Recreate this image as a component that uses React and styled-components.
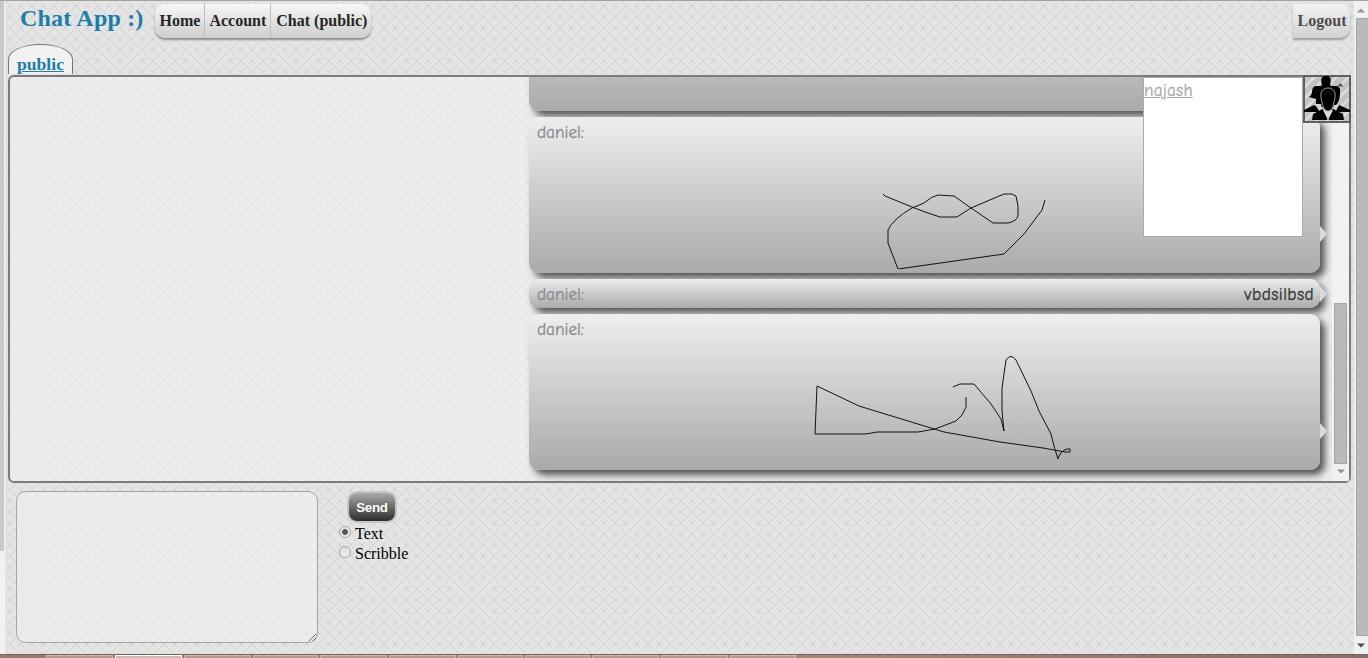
import React from "react";
import styled, { createGlobalStyle, css } from "styled-components";

const weave =
  "data:image/svg+xml," +
  encodeURIComponent(
    '<svg xmlns="http://www.w3.org/2000/svg" width="22" height="22"><g fill="none" stroke="#bdbdbd" stroke-width=".6"><path d="M11 0L22 11L11 22L0 11Z" opacity=".75"/><path opacity=".85" d="M8 8l6 6M14 8l-6 6M0 0l3 3M22 0l-3 3M0 22l3-3M22 22l-3-3"/></g></svg>'
  );

const Global = createGlobalStyle`
  * { box-sizing: border-box; }
  body { margin: 0; overflow: hidden; font-family: "Liberation Serif", serif; font-size: 16px; color: #000; }
`;

const comic = css`
  font-family: "Comic Sans MS", "Comic Neue", Lato, sans-serif;
  font-size: 17.2px;
  line-height: 22px;
  -webkit-text-stroke: 0.3px currentColor;
`;

const Screen = styled.div`
  display: flex;
  flex-direction: column;
  height: 658px;
`;
const Viewport = styled.div`
  display: flex;
  height: 654px;
  border-top: 1px solid #a3a1a1;
`;
const EdgeStrip = styled.div`
  width: 5px;
  border-right: 1px solid #f4f4f4;
  background: linear-gradient(#c9c9c9 550px, #f1f1f1 550px);
`;
const Page = styled.div`
  flex: 1;
  min-width: 0;
  padding: 3px 3px 0;
  background: #e4e4e4 url("${weave}") fixed -1px 6px;
`;
const Header = styled.header`
  display: flex;
  align-items: flex-start;
  height: 40px;
  padding-right: 1px;
`;
const Title = styled.h1`
  margin: 0;
  padding-left: 12px;
  width: 147px;
  font-size: 24px;
  line-height: 29px;
  letter-spacing: 0.2px;
  color: #1d7da8;
  white-space: nowrap;
`;
const Nav = styled.nav`
  display: flex;
  margin-left: ${(p) => (p.$end ? "auto" : 0)};
  border-radius: ${(p) => (p.$end ? "0 10px 10px 0" : "10px")};
  background: linear-gradient(#f7f7f7, #cecece);
  box-shadow: 0 2px 2px #8e8e8e;
  opacity: ${(p) => (p.$end ? 0.8 : 1)};
`;
const NavItem = styled.a`
  height: 34px;
  padding: 0 ${(p) => p.$r ?? 4}px 0 ${(p) => p.$l ?? 4}px;
  line-height: 34px;
  font-weight: bold;
  color: #262626;
  white-space: nowrap;
  & + & { border-left: 1px solid #bebebe; }
`;
const Tab = styled.div`
  width: 65px;
  height: 30px;
  margin-bottom: 1px;
  padding: 9px 0 0 8px;
  border: 1px solid #777;
  border-bottom: 0;
  border-radius: 32px 32px 0 0 / 15px 15px 0 0;
  background: rgba(245, 245, 245, 0.8);
  a { font-size: 17.6px; line-height: 21px; font-weight: bold; color: #1d7da8; text-decoration: underline; }
`;
const Room = styled.section`
  position: relative;
  display: flex;
  width: 1343px;
  height: 408px;
  border: 2px solid #7b7b7b;
  border-radius: 6px;
  background: rgba(242, 242, 242, 0.55);
`;
const Messages = styled.div`
  flex: 1;
  display: flex;
  flex-direction: column;
  justify-content: flex-end;
  gap: 6px;
  padding: 0 12px 11px 519px;
  overflow: hidden;
`;
const Message = styled.article`
  ${comic}
  position: relative;
  display: flex;
  flex: none;
  justify-content: space-between;
  height: ${(p) => p.$h}px;
  padding: 5px 6px 0 8px;
  border-radius: 10px;
  background: linear-gradient(#eee, #aaa);
  box-shadow: 5px 5px 7px #555;
  color: #333;
  &::after {
    content: "";
    position: absolute;
    left: 100%;
    top: ${(p) => p.$tip}px;
    border: 8px solid transparent;
    border-left: 7px solid #dadada;
    border-right: 0;
  }
`;
const Author = styled.span`
  color: #8b8b8b;
`;
const Body = styled.span`
  letter-spacing: 0.45px;
`;
const Scribble = styled.svg`
  width: 300px;
  height: 148px;
  margin: -1px 227px 0 0;
  fill: none;
  stroke: #111;
  stroke-width: 1;
`;
const Track = styled.div`
  display: flex;
  flex-direction: column;
  align-items: center;
  justify-content: ${(p) => (p.$page ? "space-between" : "flex-end")};
  width: ${(p) => (p.$page ? 14 : 17)}px;
  padding: ${(p) => (p.$page ? "7px 0 6px" : "0 0 7px")};
  background: #f1f1f1;
  svg { display: block; }
`;
const Thumb = styled.div`
  width: ${(p) => (p.$page ? 12 : 13)}px;
  height: ${(p) => p.$h}px;
  margin: ${(p) => (p.$page ? "0 0 3px 2px" : "0 0 5px")};
  border: 1px solid #a6a6a6;
  background: #bababa;
  ${(p) => p.$page && "border-right: 0;"}
`;
const UserList = styled.div`
  ${comic}
  position: absolute;
  left: 1133px;
  top: 0;
  width: 160px;
  height: 160px;
  border: 1px solid #aaa;
  background: #fff;
  color: #aaa;
  padding-top: 2px;
  a { text-decoration: underline; letter-spacing: 0.2px; }
`;
const UsersButton = styled.button`
  position: absolute;
  right: -2px;
  top: -2px;
  width: 48px;
  height: 48px;
  padding: 0;
  border: 2px solid #606060;
  background: repeating-linear-gradient(135deg, #c4c4c4 0 5px, #dedede 6px 8px);
  svg { display: block; overflow: visible; }
`;
const Composer = styled.form`
  display: flex;
  padding: 8px 0 0 8px;
`;
const Input = styled.textarea`
  width: 302px;
  height: 152px;
  border: 1px solid #a4a4a4;
  border-radius: 10px;
  background: rgba(242, 242, 242, 0.55);
  resize: both;
`;
const Controls = styled.div`
  display: flex;
  flex-direction: column;
  align-items: flex-start;
  margin-left: 21px;
`;
const Send = styled.button`
  width: 46px;
  height: 28px;
  margin: 2px 0 3px 10px;
  padding: 0;
  border: 0;
  border-radius: 8px;
  background: linear-gradient(#aaa, #2c2c2c);
  box-shadow: 0 0 0 2px #c5c5c5;
  color: #fff;
  font: bold 13.3px "Liberation Sans", sans-serif;
  letter-spacing: -0.25px;
`;
const Choice = styled.label`
  display: flex;
  gap: 4px;
  height: 20px;
  line-height: 20px;
`;
const Radio = styled.span`
  width: 12px;
  height: 12px;
  margin-top: 2px;
  border: 1px solid #a5a5a5;
  border-radius: 50%;
  background: ${(p) => (p.$on ? "radial-gradient(circle, #555 0 2.5px, #e8e8e8 3.3px)" : "linear-gradient(#dcdcdc, #efefef)")};
`;
const Taskbar = styled.div`
  display: flex;
  gap: 2px;
  height: 4px;
  padding-left: 46px;
  border-top: 1px solid #76645c;
  background: linear-gradient(90deg, #947d70, #a18975 60%, #857066);
`;
const Task = styled.div`
  width: ${(p) => p.$w}px;
  border: 1px solid ${(p) => (p.$active ? "#fff" : "#cbb8ac")};
  border-bottom: 0;
  background: ${(p) => (p.$active ? "#cdbbb1" : "#b39c8e")};
`;

const Arrow = ({ up, dark }) => (
  <svg width="8" height="5" viewBox="0 0 8 5">
    <path d={up ? "M0 4.5L4 .5L8 4.5Z" : "M0 .5H8L4 4.5Z"} fill={dark ? "#4c4c4c" : "#939393"} />
  </svg>
);

const Group = () => (
  <svg width="44" height="44" viewBox="0 0 44 44">
    <path d="M14 11L17 8C15 1 17 -1 21 -1C25 -1 27 1 25 8L29 11V30H14Z" />
    <path d="M7 15Q7 9 11 9L16 9V28H11V22L4 20Q7 18 7 15Z" />
    <path d="M27 9H32Q36 10 35 16Q35 24 31 28H27Z" />
    <path d="M-1 35V33L9 28L17 33V35ZM45 35V33L34 28L26 33V35Z" />
    <path d="M10 27H16L17 32L14 34ZM29 28L34 28L31 34L28 32Z" fill="#d4d4d4" />
    <path d="M32 9.500L35.500 6L38.500 9.500Z" fill="#555" />
    <path d="M7 43L8 37L18 32L24 43ZM39 43L38 37L28 32L22 43Z" />
    <path d="M18 33L23 43L28 33Z" fill="#ddd" />
    <path d="M23 11C15 11 15 19 17 25C18 31 20 34 23 34C26 34 28 31 29 25C31 19 31 11 23 11Z" stroke="#9a9a9a" />
  </svg>
);

const tasks = [67, 67, 67, 65, 67, 67, 65, 65, 67, 67, 66];

export default function App() {
  return (
    <Screen>
      <Global />
      <Viewport>
        <EdgeStrip />
        <Page>
          <Header>
            <Title>Chat App :)</Title>
            <Nav>
              <NavItem $l={4.5}>Home</NavItem>
              <NavItem>Account</NavItem>
              <NavItem $l={5}>Chat (public)</NavItem>
            </Nav>
            <Nav $end>
              <NavItem $l={5} $r={3.5}>Logout</NavItem>
            </Nav>
          </Header>
          <Tab><a>public</a></Tab>
          <Room>
            <Messages>
              <Message $h={156} $tip={110} />
              <Message $h={156} $tip={109}>
                <Author>daniel:</Author>
                <Scribble viewBox="787 121 300 148">
                  <path d="M883 194L885 196L912 207L925 212L940 217H957L971 208L1004 194H1012L1016 196L1018 206V216Q1017 221 1008 223H993L971 208L954 196L938 195Q932 196 924 203L912 208Q893 219 888 230V243L898 269L1004 254L1024 234L1042 210L1045 200" />
                </Scribble>
              </Message>
              <Message $h={29} $tip={7}>
                <Author>daniel:</Author>
                <Body>vbdsilbsd</Body>
              </Message>
              <Message $h={156} $tip={109}>
                <Author>daniel:</Author>
                <Scribble viewBox="787 318 300 148">
                  <path d="M966 397V407Q963 416 956 421L935 429L918 432H877L866 434H815L817 386L859 406L944 432L1000 442L1043 448L1065 452H1070V449Q1065 448 1060 454L1058 459L1054 446L1051 434L1039 411L1031 391L1016 360Q1011 353 1006 360L1002 388V411L1004 431L1001 419L991 404L974 384H960L953 387" />
                </Scribble>
              </Message>
            </Messages>
            <Track>
              <Thumb $h={161} />
              <Arrow />
            </Track>
            <UserList><a>najash</a></UserList>
            <UsersButton type="button"><Group /></UsersButton>
          </Room>
          <Composer>
            <Input />
            <Controls>
              <Send type="button">Send</Send>
              <Choice><Radio $on />Text</Choice>
              <Choice><Radio />Scribble</Choice>
            </Controls>
          </Composer>
        </Page>
        <Track $page>
          <Arrow up />
          <Thumb $page $h={618} />
          <Arrow dark />
        </Track>
      </Viewport>
      <Taskbar>
        {tasks.map((w, i) => <Task key={i} $w={w} $active={i === 1} />)}
      </Taskbar>
    </Screen>
  );
}
